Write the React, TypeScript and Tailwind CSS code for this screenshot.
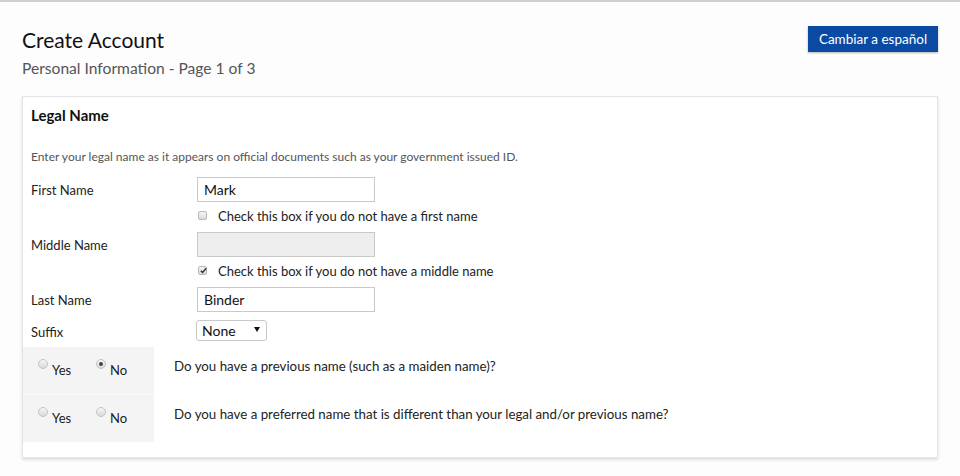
import React from 'react';

const font = { fontFamily: 'Lato, "Open Sans", sans-serif' };

function Box({ checked }: { checked?: boolean }) {
  return (
    <span className="relative block w-[9px] h-[9px] rounded-[2px] border border-[#b9b9b9] bg-gradient-to-b from-[#f4f4f4] to-[#dcdcdc]">
      {checked && (
        <svg viewBox="0 0 10 10" className="absolute left-[0px] top-[-1px] w-[9px] h-[9px]">
          <path d="M2 5.2 L4 7.2 L8 2.5" fill="none" stroke="#333" strokeWidth="1.6" />
        </svg>
      )}
    </span>
  );
}

function Radio({ checked }: { checked?: boolean }) {
  return (
    <span className="flex items-center justify-center w-[10px] h-[10px] rounded-full border border-[#c3c3c3] bg-gradient-to-b from-[#f6f6f6] to-[#dadada]">
      {checked && <span className="w-[4px] h-[4px] rounded-full bg-[#444]" />}
    </span>
  );
}

function Field({ label, value, disabled }: { label: string; value?: string; disabled?: boolean }) {
  return (
    <div className="flex items-center h-[25px]">
      <div className="w-[166px] text-[13px] text-[#222] mt-[2px]">{label}</div>
      <div
        className={`w-[178px] h-[25px] border border-[#c9c9c9] px-[6px] flex items-center text-[14px] text-[#111] ${
          disabled ? 'bg-[#eeeeee]' : 'bg-white'
        }`}
      >
        {value}
      </div>
    </div>
  );
}

function CheckRow({ text, checked }: { text: string; checked?: boolean }) {
  return (
    <div className="flex items-center h-[30px] pl-[167px]">
      <span className="w-[20px] -mt-[4px] flex">
        <Box checked={checked} />
      </span>
      <span className="text-[13px] text-[#222]">{text}</span>
    </div>
  );
}

function YesNo({ question, no }: { question: string; no?: boolean }) {
  return (
    <div className="flex h-[47px]">
      <div className="w-[131px] bg-[#f4f4f4] flex items-start pt-[12px] pl-[15px]">
        <div className="flex items-start w-[58px]">
          <Radio />
          <span className="ml-[4px] mt-[2px] text-[13px] leading-[19px] text-[#222]">Yes</span>
        </div>
        <div className="flex items-start">
          <Radio checked={no} />
          <span className="ml-[4px] mt-[2px] text-[13px] leading-[19px] text-[#222]">No</span>
        </div>
      </div>
      <div className="pl-[20px] pt-[10px] text-[13.3px] leading-[19px] text-[#222]">{question}</div>
    </div>
  );
}

export default function App() {
  return (
    <div style={font} className="w-[960px] h-[476px] bg-[#fdfdfd] border-t-2 border-[#cfcfcf] overflow-hidden">
      {/* Header */}
      <div className="flex justify-between px-[22px]">
        <div className="pt-[24px]">
          <h1 className="text-[21px] leading-[28px] text-[#111]">Create Account</h1>
          <p className="mt-[4px] text-[15.6px] leading-[20px] text-[#555]">Personal Information - Page 1 of 3</p>
        </div>
        <button className="mt-[24px] h-[26px] w-[130px] bg-[#0b4aa3] text-white text-[13.5px] shadow-[0_1px_2px_rgba(0,0,0,0.3)]">
          Cambiar a español
        </button>
      </div>

      {/* Card */}
      <div className="mx-[22px] mt-[18px] border border-[#e4e4e4] bg-white shadow-[0_2px_3px_rgba(0,0,0,0.12)]">
        <div className="pl-[8px] pt-[8px]">
          <h2 className="text-[15px] leading-[20px] font-bold text-[#111]">Legal Name</h2>
          <p className="mt-[24px] text-[12px] leading-[16px] text-[#555]">
            Enter your legal name as it appears on official documents such as your government issued ID.
          </p>
          <div className="mt-[12px]">
            <Field label="First Name" value="Mark" />
            <CheckRow text="Check this box if you do not have a first name" />
            <Field label="Middle Name" disabled />
            <CheckRow text="Check this box if you do not have a middle name" checked />
            <Field label="Last Name" value="Binder" />
            <div className="flex items-center h-[21px] mt-[8px]">
              <div className="w-[165px] text-[13px] text-[#222] mt-[4px]">Suffix</div>
              <div className="relative w-[71px] h-[21px] border border-[#c9c9c9] rounded-[3px] bg-white flex items-center pl-[5px] text-[14px] text-[#111]">
                None
                <span className="absolute right-[6px] top-[6px] w-0 h-0 border-l-[3px] border-r-[3px] border-t-[5px] border-l-transparent border-r-transparent border-t-[#111]" />
              </div>
            </div>
          </div>
        </div>
        <div className="mt-[6px] pb-[15px]">
          <YesNo question="Do you have a previous name (such as a maiden name)?" no />
          <div className="w-[131px] h-px bg-[#fafafa]" />
          <YesNo question="Do you have a preferred name that is different than your legal and/or previous name?" />
        </div>
      </div>
    </div>
  );
}
